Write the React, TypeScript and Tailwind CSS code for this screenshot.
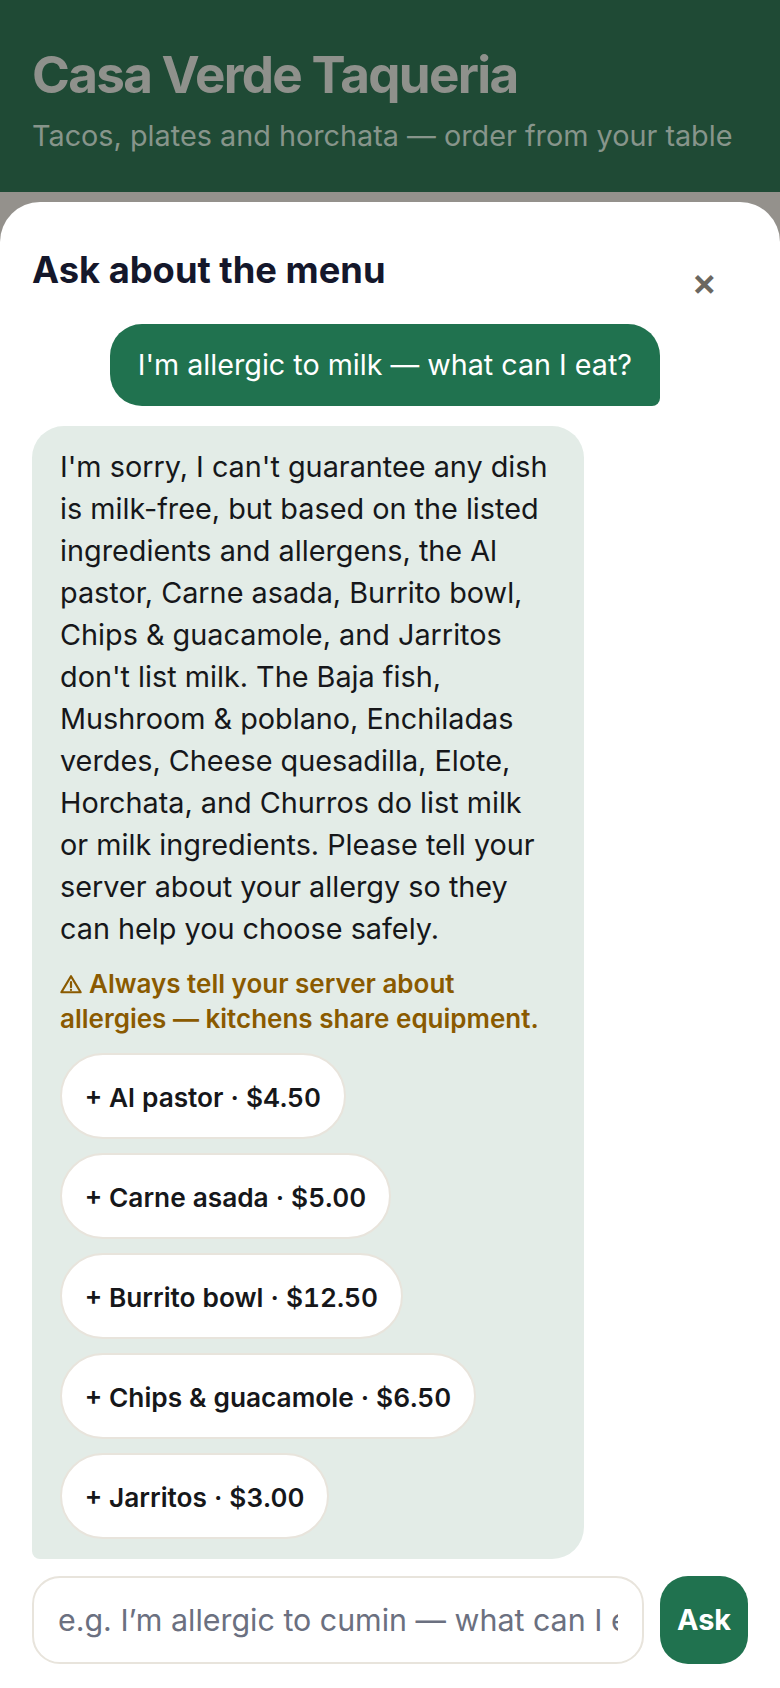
const items = [
  "+ Al pastor · $4.50",
  "+ Carne asada · $5.00",
  "+ Burrito bowl · $12.50",
  "+ Chips & guacamole · $6.50",
  "+ Jarritos · $3.00",
];

export default function App() {
  return (
    <div className="h-[1688px] w-[780px] flex flex-col overflow-hidden bg-[#94918c] font-['Inter',sans-serif]">
      <header className="h-[192px] shrink-0 bg-[#1f4a35] px-8 pt-[42px]">
        <h1 className="text-[51.2px] leading-[64px] font-bold tracking-[-1.7px] text-[#8f918c]">Casa Verde Taqueria</h1>
        <p className="mt-[9px] text-[28.8px] leading-[42px] text-[#87958b]">Tacos, plates and horchata — order from your table</p>
      </header>
      <div className="mt-[10px] flex-1 min-h-0 flex flex-col bg-white rounded-t-[40px] px-8">
        <div className="h-[122px] shrink-0 flex items-start justify-between">
          <h2 className="mt-[46px] text-[36.3px] leading-[44px] font-bold text-[#14172b]">Ask about the menu</h2>
          <span className="mt-[61px] mr-[31px] text-[38px] leading-[36px] font-semibold text-[#6b6760]">×</span>
        </div>
        <div className="flex-1 min-h-0 overflow-hidden flex flex-col items-start">
          <div className="self-end mr-[88px] bg-[#20724f] text-white text-[28.7px] leading-[42px] rounded-[32px] rounded-br-[8px] px-7 py-5 whitespace-nowrap">
            I'm allergic to milk — what can I eat?
          </div>
          <div className="mt-5 w-[552px] shrink-0 bg-[#e3ece7] rounded-[32px] rounded-bl-[8px] px-7 pt-5 pb-5">
            <p className="text-[28.8px] leading-[42px] text-[#16171a]">
              I'm sorry, I can't guarantee any dish is milk-free, but based on the listed ingredients and allergens, the Al pastor, Carne asada, Burrito bowl, Chips & guacamole, and Jarritos don't list milk. The Baja fish, Mushroom & poblano, Enchiladas verdes, Cheese quesadilla, Elote, Horchata, and Churros do list milk or milk ingredients. Please tell your server about your allergy so they can help you choose safely.
            </p>
            <p className="mt-4 text-[26px] leading-[35px] font-semibold text-[#8a5a00]">
              <svg viewBox="0 0 24 24" className="inline-block w-[22px] h-[22px] align-[-2px] mr-[7px]" fill="none" stroke="currentColor" strokeWidth="2.4" strokeLinejoin="round" strokeLinecap="round">
                <path d="M12 3.5 22.5 21h-21Z" />
                <path d="M12 10v5.5M12 18.4v.1" />
              </svg>
              Always tell your server about allergies — kitchens share equipment.
            </p>
            <div className="mt-[17px] flex flex-col items-start gap-[14px]">
              {items.map((t) => (
                <button key={t} className="h-[86px] pt-[3px] px-[23px] rounded-full bg-white border-2 border-[#e8e4dc] text-[26.24px] font-semibold tabular-nums text-[#16171a] whitespace-nowrap">{t}</button>
              ))}
            </div>
          </div>
        </div>
        <div className="h-[128px] shrink-0 flex items-start gap-4 pt-4">
          <input readOnly placeholder="e.g. I’m allergic to cumin — what can I eat?" className="w-[612px] h-[88px] rounded-[28px] border-2 border-[#e8e4dc] px-6 text-[30.4px] text-[#16171a] placeholder:text-[#6b7080] outline-none" />
          <button className="w-[88px] h-[88px] rounded-[28px] bg-[#20724f] text-white text-[28.8px] font-bold">Ask</button>
        </div>
      </div>
    </div>
  );
}
